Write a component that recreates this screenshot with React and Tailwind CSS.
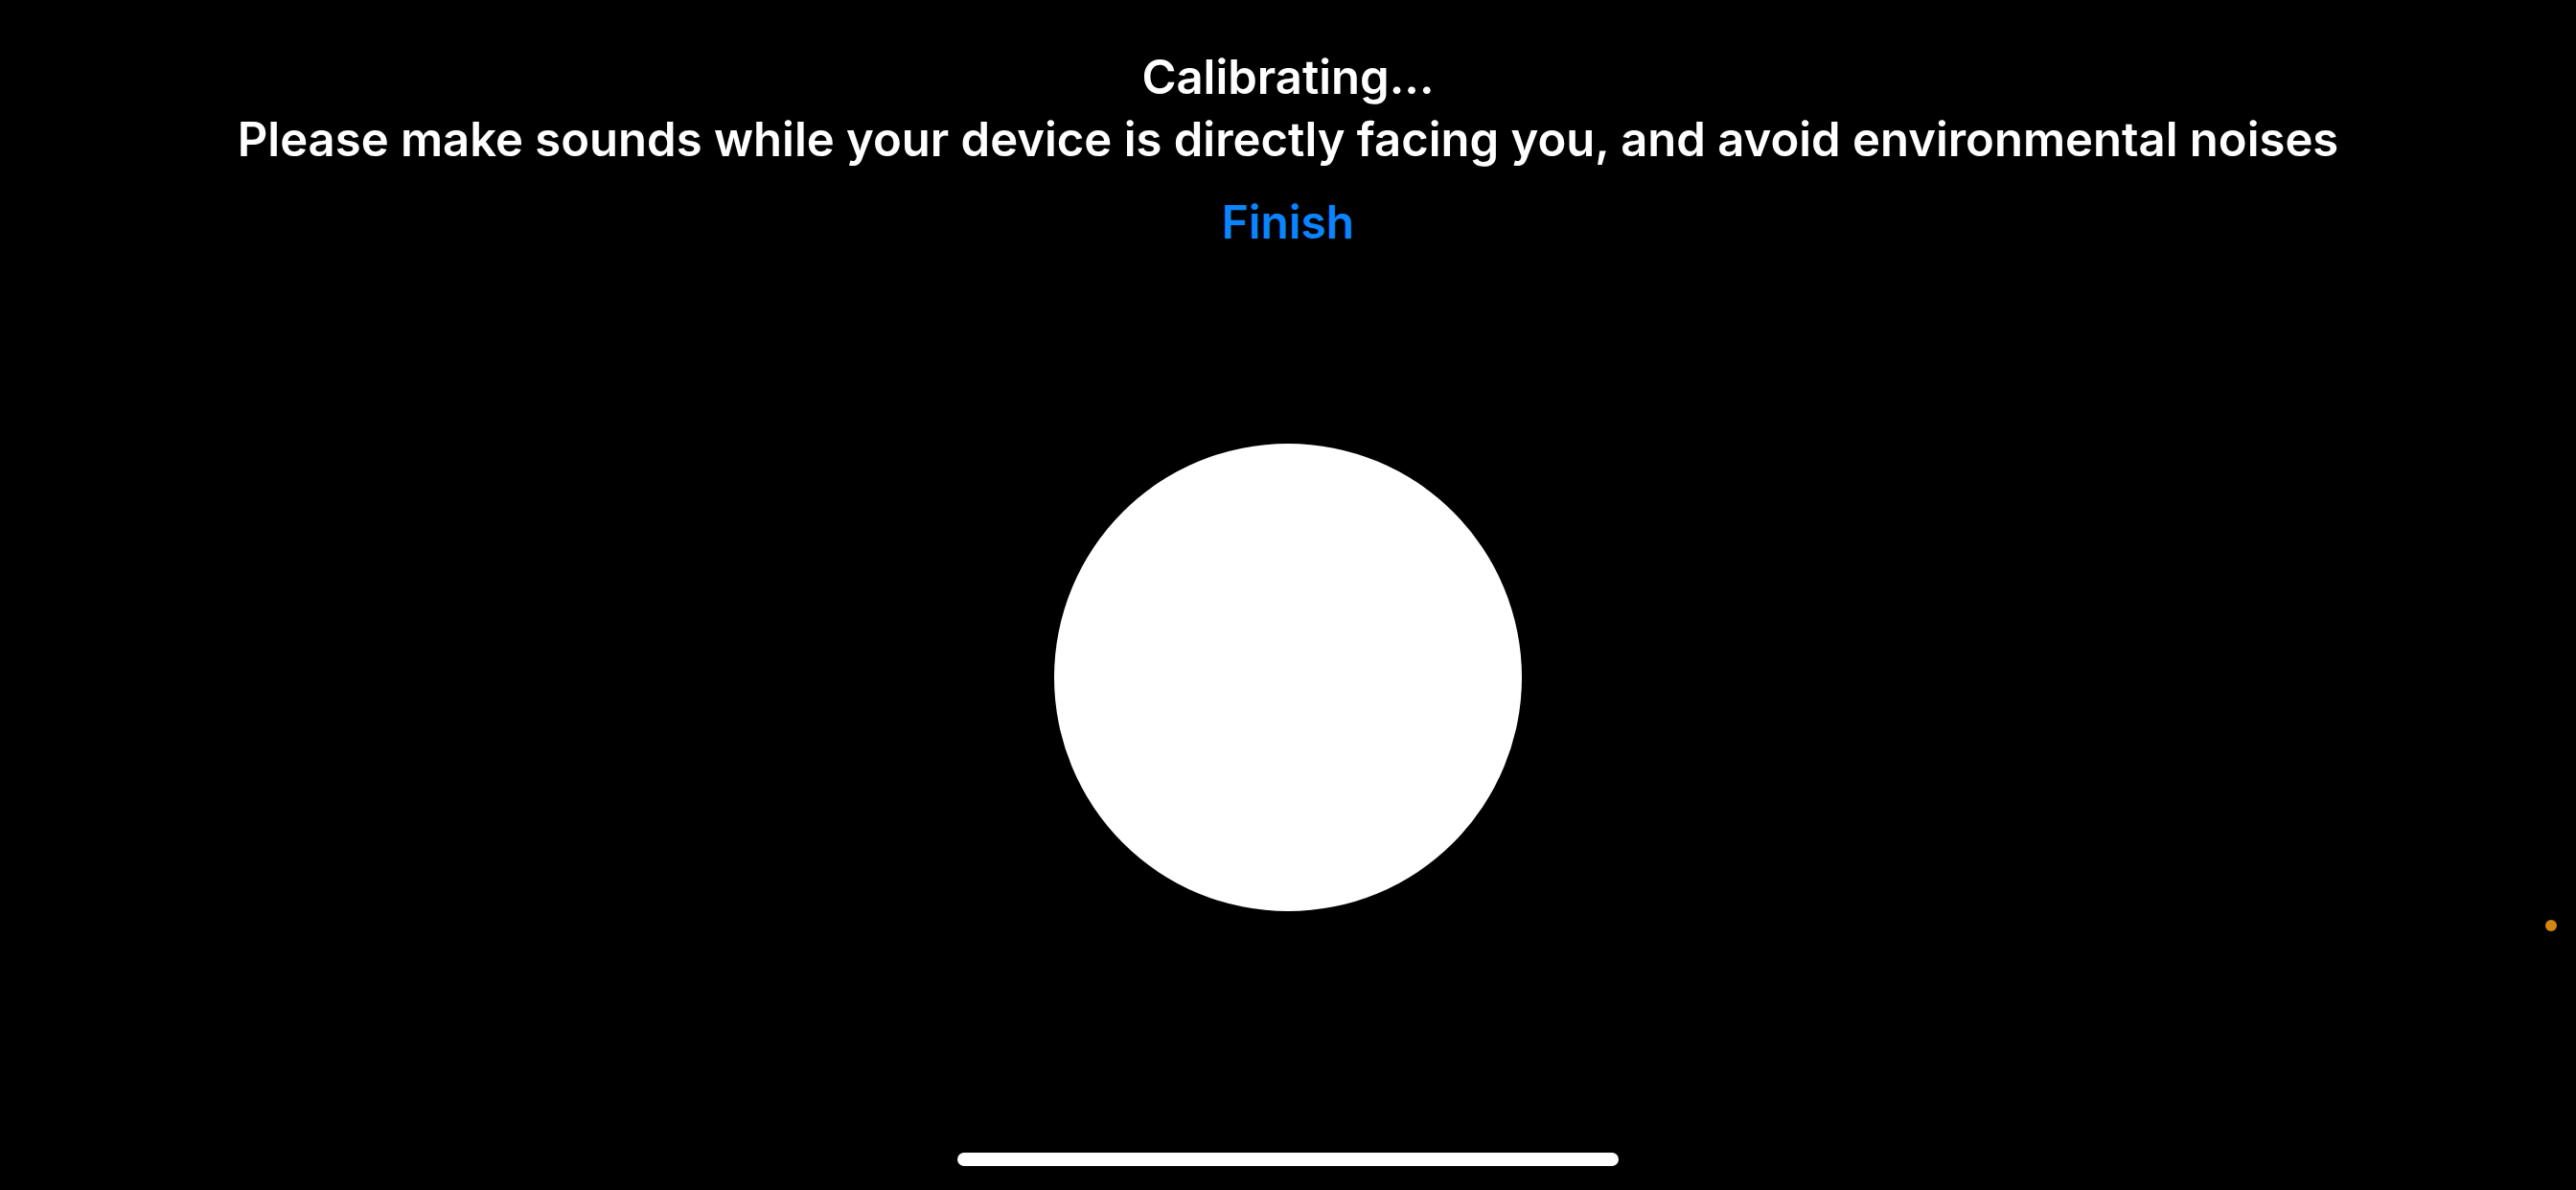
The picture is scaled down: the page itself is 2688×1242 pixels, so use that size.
import React from "react";

export default function App() {
  return (
    <div
      className="relative w-[2688px] h-[1242px] bg-black overflow-hidden flex flex-col items-center pt-[48px] text-white"
      style={{ fontFamily: "Inter, 'Noto Sans', sans-serif" }}
    >
      {/* Instructions */}
      <div className="text-center text-[49px] leading-[65px] font-semibold">
        <p>Calibrating...</p>
        <p>Please make sounds while your device is directly facing you, and avoid environmental noises</p>
      </div>

      <button className="mt-[24px] text-[48px] leading-[60px] font-semibold text-[#0a84ff]">
        Finish
      </button>

      {/* Sound level circle */}
      <div className="mt-[201px] w-[488px] h-[488px] rounded-full bg-white" />

      {/* Privacy indicator */}
      <div className="absolute left-[2656px] top-[960px] w-[12px] h-[12px] rounded-full bg-[#d3850f]" />

      {/* Home indicator */}
      <div className="absolute bottom-[25px] left-1/2 -translate-x-1/2 w-[690px] h-[14px] rounded-full bg-white" />
    </div>
  );
}
